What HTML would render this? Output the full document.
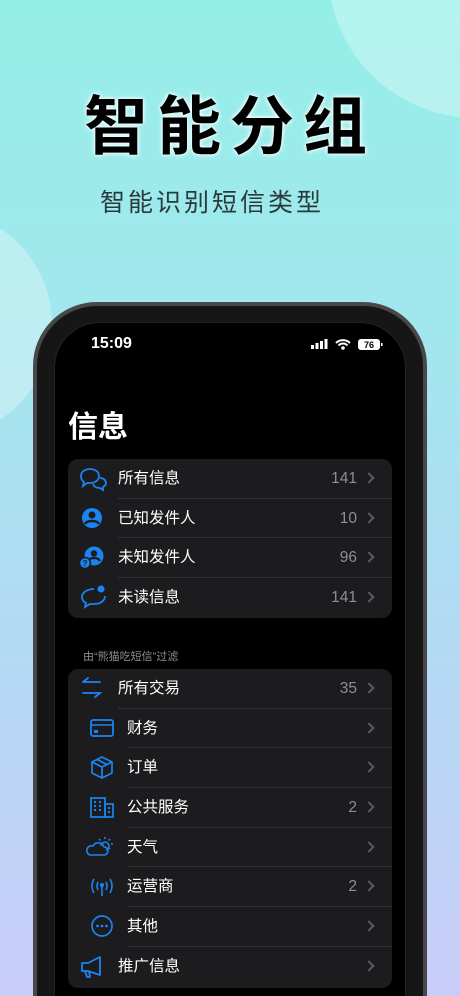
<!DOCTYPE html>
<html style="width:460px;height:996px;overflow:hidden"><head><meta charset="utf-8"><style>
*{margin:0;padding:0;box-sizing:border-box}
body{width:460px;height:996px;overflow:hidden;margin:0;font-family:"Liberation Sans","Noto Sans CJK SC",sans-serif}
.wrap{position:relative;width:460px;height:996px;overflow:hidden;background:linear-gradient(180deg,#94efe8 0%,#a3e6ee 35%,#b6d8f4 70%,#c8ccf8 100%)}
.t1{position:absolute;left:84px;top:76px;font-size:64px;font-weight:bold;letter-spacing:9px;color:#000;text-shadow:0 0 6px #fff,0 0 3px #fff}
.t2{position:absolute;left:100px;top:183px;font-size:25px;letter-spacing:3px;color:#2a3a3c}
.phone{position:absolute;left:33px;top:302px;width:394px;height:694px;border-radius:64px 64px 0 0;background:#161616;border:4px solid #48484a;border-bottom:none}
.screen{position:absolute;left:54px;top:322px;width:352px;height:674px;border-radius:46px 46px 0 0;background:#000;border:1px solid #222;border-bottom:none}
.time{position:absolute;left:91px;top:335px;color:#fff;font-size:16px;font-weight:bold}
.h{position:absolute;left:68px;top:408px;color:#fff;font-size:30px;font-weight:bold;line-height:40px}
.card{position:absolute;left:68px;width:324px;background:#1c1c1e;border-radius:10px}
.row{height:39.7px;position:relative;color:#fff;font-size:15.5px}
.row .lb{position:absolute;left:50px;top:0;line-height:39px}
.row .n{position:absolute;right:35px;top:0;line-height:39px;color:#8e8e93;font-size:15.5px}
.row .ch{position:absolute;right:19px;top:15px;width:8px;height:8px;border-right:2px solid #5b5b60;border-top:2px solid #5b5b60;transform:rotate(45deg)}
.row .sep{position:absolute;left:50px;right:0;bottom:0;height:1px;background:#333336}
.row svg{position:absolute;left:10px;top:7px}
.sub{position:absolute;left:83px;top:648px;color:#8e8e93;font-size:11px}
</style></head><body><div class="wrap">
<svg style="position:absolute;left:0;top:0" width="460" height="500"><circle cx="476" cy="-30" r="148" fill="rgba(255,255,255,0.3)"/><circle cx="-62" cy="324" r="114" fill="rgba(255,255,255,0.3)"/></svg>
<div class="t1">智能分组</div>
<div class="t2">智能识别短信类型</div>
<div class="phone"></div>
<div class="screen"></div>
<div class="time">15:09</div>
<svg style="position:absolute;left:311px;top:338px" width="72" height="14">
<g fill="#fff"><rect x="0" y="7" width="3" height="4"/><rect x="4.5" y="5" width="3" height="6"/><rect x="9" y="3" width="3" height="8"/><rect x="13.5" y="1" width="3" height="10"/></g>
<path d="M25 5a10 10 0 0 1 14 0M27.5 7.5a6 6 0 0 1 9 0" stroke="#fff" stroke-width="2" fill="none"/><circle cx="32" cy="10" r="1.8" fill="#fff"/>
<rect x="47" y="1" width="22" height="11" rx="3" fill="#fff"/><rect x="70" y="5" width="1.5" height="3" fill="#fff"/>
<text x="58" y="10" font-size="9" font-weight="bold" text-anchor="middle" fill="#000" font-family="Liberation Sans">76</text></svg>
<div class="h">信息</div>
<div class="card" style="top:459px">
<div class="row"><svg width="32" height="26"><path d="M3 10c0-5 5-7 9-7s9 2 9 7-5 7-9 7c-1 0-2 0-3 0l-4 3 1-4c-2-1-3-3-3-6z" stroke="#1b84f2" stroke-width="1.8" fill="none"/><path d="M15 18c1 3 4 4 7 4l3 2 0-3c2-1 3-2 3-4 0-3-3-5-6-5" stroke="#1b84f2" stroke-width="1.8" fill="none"/></svg><span class="lb">所有信息</span><span class="n">141</span><i class="ch"></i><div class="sep"></div></div>
<div class="row"><svg width="32" height="26"><circle cx="14" cy="12" r="10" fill="#1b84f2"/><circle cx="14" cy="9" r="3.5" fill="#1c1c1e"/><path d="M7 18c2-4 12-4 14 0" stroke="#1c1c1e" stroke-width="2.5" fill="none"/></svg><span class="lb">已知发件人</span><span class="n">10</span><i class="ch"></i><div class="sep"></div></div>
<div class="row"><svg width="32" height="26"><circle cx="16" cy="11" r="9.5" fill="#1b84f2"/><circle cx="16" cy="8.5" r="3.2" fill="#1c1c1e"/><path d="M10 16c2-4 10-4 12 0" stroke="#1c1c1e" stroke-width="2.3" fill="none"/><circle cx="7" cy="18" r="5.5" fill="#1b84f2" stroke="#1c1c1e" stroke-width="1.5"/><text x="7" y="21" font-size="8" text-anchor="middle" fill="#1c1c1e" font-weight="bold">?</text></svg><span class="lb">未知发件人</span><span class="n">96</span><i class="ch"></i><div class="sep"></div></div>
<div class="row"><svg width="32" height="26"><path d="M16 4c-6 0-12 3-12 8 0 3 2 5 4 6l-1 4 5-3c1 0 3 0 4 0 6 0 11-3 11-8" stroke="#1b84f2" stroke-width="1.8" fill="none"/><circle cx="23" cy="4" r="3.5" fill="#1b84f2"/></svg><span class="lb">未读信息</span><span class="n">141</span><i class="ch"></i></div>
</div>
<div class="sub">由“熊猫吃短信”过滤</div>
<div class="card" style="top:669px;height:319px">
<div class="row"><svg width="32" height="26"><path d="M22 6H5M5 6l5-4M5 17h17l-5 4" stroke="#1b84f2" stroke-width="1.8" fill="none" stroke-linecap="round"/></svg><span class="lb">所有交易</span><span class="n">35</span><i class="ch"></i><div class="sep" style="left:50px"></div></div>
<div class="row"><svg width="40" height="26" style="left:20px"><rect x="3" y="4" width="22" height="16" rx="2" stroke="#1b84f2" stroke-width="1.8" fill="none"/><line x1="3" y1="9" x2="25" y2="9" stroke="#1b84f2" stroke-width="1.5"/><rect x="6" y="14" width="4" height="3" fill="#1b84f2"/></svg><span class="lb" style="left:59px">财务</span><i class="ch"></i><div class="sep" style="left:59px"></div></div>
<div class="row"><svg width="40" height="26" style="left:20px"><path d="M14 2l10 5v11l-10 5-10-5V7z M4 7l10 5 10-5 M14 12v11 M9 4.5l10 5" stroke="#1b84f2" stroke-width="1.7" fill="none" stroke-linejoin="round"/></svg><span class="lb" style="left:59px">订单</span><i class="ch"></i><div class="sep" style="left:59px"></div></div>
<div class="row"><svg width="40" height="26" style="left:20px"><rect x="3" y="3" width="14" height="19" stroke="#1b84f2" stroke-width="1.7" fill="none"/><rect x="17" y="9" width="8" height="13" stroke="#1b84f2" stroke-width="1.7" fill="none"/><g fill="#1b84f2"><rect x="6" y="6" width="2" height="2"/><rect x="11" y="6" width="2" height="2"/><rect x="6" y="10" width="2" height="2"/><rect x="11" y="10" width="2" height="2"/><rect x="6" y="14" width="2" height="2"/><rect x="11" y="14" width="2" height="2"/><rect x="20" y="12" width="2" height="2"/><rect x="20" y="16" width="2" height="2"/></g></svg><span class="lb" style="left:59px">公共服务</span><span class="n">2</span><i class="ch"></i><div class="sep" style="left:59px"></div></div>
<div class="row"><svg width="40" height="26" style="left:16px"><path d="M6 20h14a4 4 0 0 0 0-8 6 6 0 0 0-11-1 4.5 4.5 0 0 0-3 9z" stroke="#1b84f2" stroke-width="1.6" fill="none"/><path d="M17 11a4 4 0 1 1 5 4" stroke="#1b84f2" stroke-width="1.6" fill="none"/><path d="M21 2v2M27 9h2M26 4l-1.5 1.5M26 14l-1.5-1.5M15 4l1.5 1.5" stroke="#1b84f2" stroke-width="1.5"/></svg><span class="lb" style="left:59px">天气</span><i class="ch"></i><div class="sep" style="left:59px"></div></div>
<div class="row"><svg width="40" height="26" style="left:20px"><path d="M6 5q-4 7 0 14M22 5q4 7 0 14M10 8q-2 4 0 8M18 8q2 4 0 8" stroke="#1b84f2" stroke-width="1.6" fill="none"/><circle cx="14" cy="11" r="2" fill="#1b84f2"/><line x1="14" y1="12" x2="14" y2="22" stroke="#1b84f2" stroke-width="1.6"/></svg><span class="lb" style="left:59px">运营商</span><span class="n">2</span><i class="ch"></i><div class="sep" style="left:59px"></div></div>
<div class="row"><svg width="40" height="26" style="left:20px"><circle cx="14" cy="12" r="10" stroke="#1b84f2" stroke-width="1.7" fill="none"/><g fill="#1b84f2"><circle cx="9.5" cy="12" r="1.4"/><circle cx="14" cy="12" r="1.4"/><circle cx="18.5" cy="12" r="1.4"/></g></svg><span class="lb" style="left:59px">其他</span><i class="ch"></i><div class="sep" style="left:59px"></div></div>
<div class="row"><svg width="32" height="26"><path d="M4 9h6l12-6v18l-12-4H4z M7 17l2 6h3l-1-6" stroke="#1b84f2" stroke-width="1.8" fill="none" stroke-linejoin="round"/></svg><span class="lb">推广信息</span><i class="ch"></i></div>
</div>
</div></body></html>
